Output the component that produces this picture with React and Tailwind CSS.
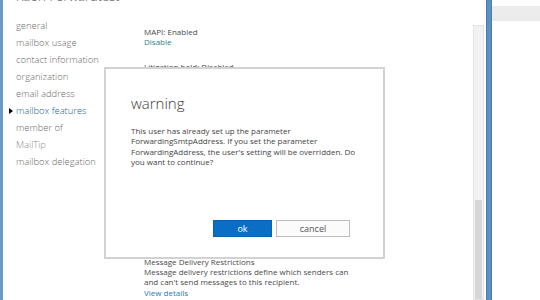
import React from 'react'

const navItems = [
  'general',
  'mailbox usage',
  'contact information',
  'organization',
  'email address',
  'mailbox features',
  'member of',
  'MailTip',
  'mailbox delegation',
]

const font = { fontFamily: '"Open Sans", "Liberation Sans", sans-serif' }

const NavItem = ({ label }) => {
  const active = label === 'mailbox features'
  const muted = label === 'MailTip'
  return (
    <li className="relative h-[17px] flex items-center">
      {active && (
        <span className="absolute left-[-7px] top-[6px] w-0 h-0 border-y-[3px] border-y-transparent border-l-[4px] border-l-black" />
      )}
      <span
        className={`text-[9.4px] font-light leading-none ${
          active ? 'text-[#1d6487]' : muted ? 'text-[#8c8c8c]' : 'text-[#6a6a6a]'
        }`}
      >
        {label}
      </span>
    </li>
  )
}

const App = () => {
  return (
    <div className="relative w-[540px] h-[300px] overflow-hidden bg-white flex" style={font}>
      {/* left frame edge */}
      <div className="w-[3px] bg-[#6b9ac8]" />

      {/* nav */}
      <div className="w-[141px] pl-[13px]">
        <div className="mt-[-10px] text-[13px] font-light text-[#555] leading-none">Kaori Forwardtest</div>
        <ul className="mt-[14px]">
          {navItems.map((n) => (
            <NavItem key={n} label={n} />
          ))}
        </ul>
      </div>

      {/* main content */}
      <div className="w-[329px] text-[8px] leading-[10.4px] text-[#4a4a4a]">
        <div className="mt-[27px]">MAPI: Enabled</div>
        <div className="text-[#2d7f88]">Disable</div>
        <div className="mt-[14px]">Litigation hold: Disabled</div>
        <div className="text-[#2d7f88]">Enable</div>
        <div className="mt-[174px]">Message Delivery Restrictions</div>
        <div>Message delivery restrictions define which senders can</div>
        <div>and can't send messages to this recipient.</div>
        <div className="text-[#2b79b5]">View details</div>
      </div>

      {/* scrollbar */}
      <div className="w-[11px] pt-[25px]">
        <div className="h-full bg-[#f2f2f2] border border-[#e2e2e2] flex flex-col">
          <div className="h-[174px]" />
          <div className="flex-1 mx-[1px] bg-[#d6d6d6]" />
        </div>
      </div>

      {/* blue divider */}
      <div className="ml-[2px] w-[6px] bg-[#5d8fc0] border-x border-[#4a7cab]" />

      {/* right pane */}
      <div className="flex-1 pt-[6px]">
        <div className="h-[15px] bg-[#ececec]" />
      </div>

      {/* warning dialog */}
      <div className="absolute left-[104px] top-[67px] w-[281px] h-[192px] bg-white border-2 border-[#d2d2d2] pl-[25px] pr-[20px]">
        <div className="mt-[27px] text-[15px] font-light text-[#3a3a3a] leading-none">warning</div>
        <p className="mt-[15px] text-[8px] leading-[10.4px] text-[#444]">
          This user has already set up the parameter ForwardingSmtpAddress. If you set the parameter
          ForwardingAddress, the user's setting will be overridden. Do you want to continue?
        </p>
        <div className="absolute left-[107px] top-[151px] flex gap-[4px]">
          <button className="w-[59px] h-[17px] bg-[#0a6fc4] border border-[#0862ad] text-white text-[9px] leading-none">
            ok
          </button>
          <button className="w-[74px] h-[17px] bg-[#fbfbfb] border border-[#bdbdbd] text-[#555] text-[9px] leading-none">
            cancel
          </button>
        </div>
      </div>
    </div>
  )
}

export default App
